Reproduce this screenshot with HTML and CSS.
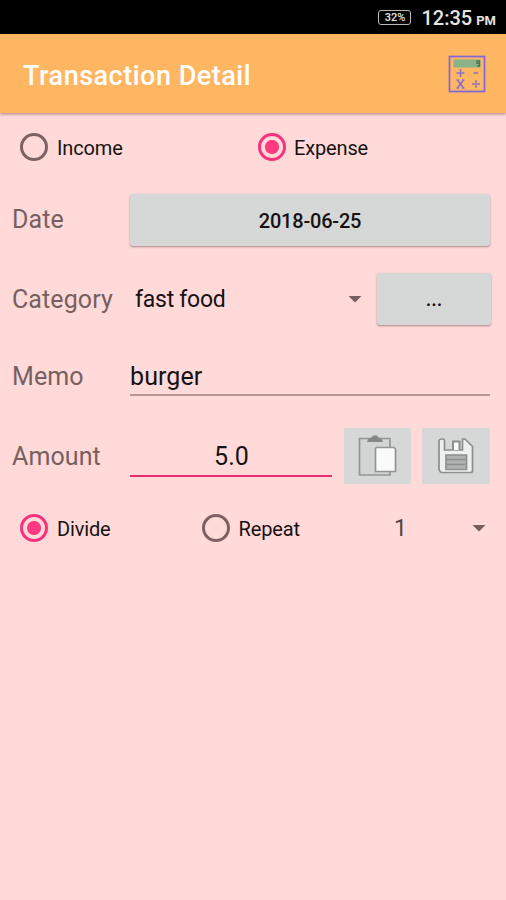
FILE: index.html
```
<!DOCTYPE html>
<html lang="en">
<head>
<meta charset="utf-8">
<title>Transaction Detail</title>
<link rel="stylesheet" href="styles.css">
</head>
<body>
<div class="status"><span class="battery">32%</span><span class="clock">12:35</span><span class="pm">PM</span></div>
<header class="appbar">
  <h1>Transaction Detail</h1>
  <svg class="calc" width="38" height="38" viewBox="0 0 38 38" fill="none" stroke="#8a70cc">
    <rect x="1.500" y="1.500" width="35" height="35" stroke="#7d66dc" stroke-width="1.700"/>
    <rect x="5.500" y="4.500" width="27" height="8" fill="#8ab28a" stroke="none"/>
    <path d="M29 6h2.500v2.300H29zM31.500 6v5h-2.500" stroke="#4e7350" stroke-width="1.300"/>
    <path d="M8.500 18h8M12.500 14v8M25.500 18h4.500M9.500 25l6 8M15.500 25l-6 8M8.500 25h2.500M14 25h2.500M8.500 33h2.500M14 33h2.500M24 29h8" stroke-width="1.600"/>
    <path d="M28 25.500v2M28 30.500v2" stroke-width="2"/>
  </svg>
</header>
<main>
  <div class="row types">
    <label class="option"><i class="radio"></i><span>Income</span></label>
    <label class="option"><i class="radio on"></i><span>Expense</span></label>
  </div>
  <div class="row date">
    <span class="label">Date</span>
    <button class="btn wide">2018-06-25</button>
  </div>
  <div class="row category">
    <span class="label">Category</span>
    <div class="spinner"><span>fast food</span><i class="caret"></i></div>
    <button class="btn more">...</button>
  </div>
  <div class="row memo">
    <span class="label">Memo</span>
    <div class="field"><span>burger</span></div>
  </div>
  <div class="row amount">
    <span class="label">Amount</span>
    <div class="field active"><span>5.0</span></div>
    <button class="tool paste" aria-label="Paste">
      <svg width="67" height="56" viewBox="0 0 67 56" fill="none" stroke="#929594" stroke-width="1.700">
        <path d="M15.500 10.500h30.500v36.500H15.500z" fill="#d2d5d4"/>
        <path d="M23 14L24.500 10.500L27.500 9.500L29 7.500H33L34.500 9.500L37.500 10.500L39 14Z" fill="#858888" stroke="none"/>
        <path d="M32.500 19.500h17.500l1.500 1.500v22.500h-20v-23z" fill="#fafafa"/>
      </svg>
    </button>
    <button class="tool save" aria-label="Save">
      <svg width="68" height="56" viewBox="0 0 68 56" fill="none" stroke="#8c8f8e" stroke-width="1.700">
        <path d="M20 11h1q1.500 0 1.500 1.500v9.500h18V11h2.500l7.500 7.500v24q0 2-2 2h-28.500q-2 0-3-3V13q0-2 3-2z" fill="#efefef"/>
        <path d="M31 22v-8.500h6.500V22" fill="#fafafa" stroke-width="2"/>
        <path d="M24 27h20.500v14.500H24z" fill="#b0b3b2"/>
        <path d="M25 31.500h18M25 36.500h18"/>
      </svg>
    </button>
  </div>
  <div class="row repeat">
    <label class="option"><i class="radio on"></i><span>Divide</span></label>
    <label class="option second"><i class="radio"></i><span>Repeat</span></label>
    <div class="count"><span>1</span><i class="caret"></i></div>
  </div>
</main>
</body>
</html>
```
FILE: styles.css
```
* { box-sizing: border-box; }
body {
  margin: 0;
  height: 900px;
  overflow: hidden;
  background: #ffdad9;
  color: #161213;
  font-family: Roboto, sans-serif;
}
.status {
  height: 34px;
  background: #000;
  color: #e4e4e4;
  display: flex;
  align-items: center;
  justify-content: flex-end;
  padding: 2px 10px 0 0;
  font-weight: 500;
}
.battery {
  width: 33px;
  height: 15px;
  margin: -2px 10px 0 0;
  border: 1px solid #bbb;
  border-radius: 3px;
  font-size: 11px;
  line-height: 13px;
  text-align: center;
}
.clock { font-size: 20px; }
.pm { font-size: 13px; font-weight: 700; margin: 4px 0 0 4px; }
.appbar {
  height: 79px;
  padding: 3px 20px 0 23px;
  display: flex;
  align-items: center;
  justify-content: space-between;
  background: #ffb662;
  box-shadow: 0 1px 3px rgba(80, 40, 40, .5);
}
.calc { margin-top: -2px; }
h1 { margin: 1px 0 0; color: #fff; font-size: 27px; font-weight: 500; letter-spacing: .5px; }
.row { display: flex; align-items: center; }
.types { height: 68px; padding-left: 20px; }
.types .option { width: 238px; }
.option { display: flex; align-items: center; font-size: 20px; letter-spacing: -.15px; }
.option span { margin: 2px 0 0 9px; }
.types .option + .option span { margin-left: 8px; }
.radio {
  width: 28px;
  height: 28px;
  flex: none;
  border: 3px solid #7c6262;
  border-radius: 50%;
}
.radio.on {
  border-color: #f9327c;
  background: radial-gradient(circle, #ff3a80 6.5px, transparent 7.5px);
}
.label { width: 117px; flex: none; color: #76605f; font-size: 25px; letter-spacing: .1px; }
.date, .category, .memo, .amount { padding: 0 16px 0 12px; }
.date { height: 78px; }
.date .label { margin-top: -2px; }
.category { height: 80px; }
.memo { height: 76px; }
.memo .label { margin-top: -1px; }
.amount { height: 82px; }
.repeat { height: 62px; padding: 0 20px; }
button { font-family: inherit; border: 0; margin: 0; padding: 0; color: inherit; }
.btn {
  height: 52px;
  border-radius: 3px;
  background: #d6d8d7;
  box-shadow: 0 1px 2px rgba(90, 50, 50, .5);
  font-size: 20px;
  font-weight: 500;
}
.wide { width: 361px; margin-left: 1px; padding-top: 1px; letter-spacing: -.2px; }
.more { width: 114px; margin-right: -1px; }
.spinner { flex: 1; display: flex; align-items: center; justify-content: space-between; padding: 0 15px 0 6px; font-size: 23px; letter-spacing: -.25px; }
.caret { width: 14px; height: 7px; background: #75605f; clip-path: polygon(0 0, 100% 0, 50% 100%); }
.field {
  flex: 1;
  height: 38px;
  margin: -1px 0 0 1px;
  border-bottom: 2px solid #b79795;
  font-size: 25px;
  line-height: 38px;
  letter-spacing: .1px;
}
.active {
  height: 42px;
  flex: none;
  width: 202px;
  padding-left: 1px;
  border-color: #e82c76;
  line-height: 43px;
  text-align: center;
}
.tool { height: 56px; background: #d6d8d7; border-radius: 2px; }
.tool svg { display: block; }
.paste { width: 67px; margin-left: 12px; }
.save { width: 68px; margin-left: 11px; }
.second { margin-left: 91px; }
.count { margin-left: auto; width: 92px; display: flex; align-items: center; justify-content: space-between; color: #554443; font-size: 23px; }
```
